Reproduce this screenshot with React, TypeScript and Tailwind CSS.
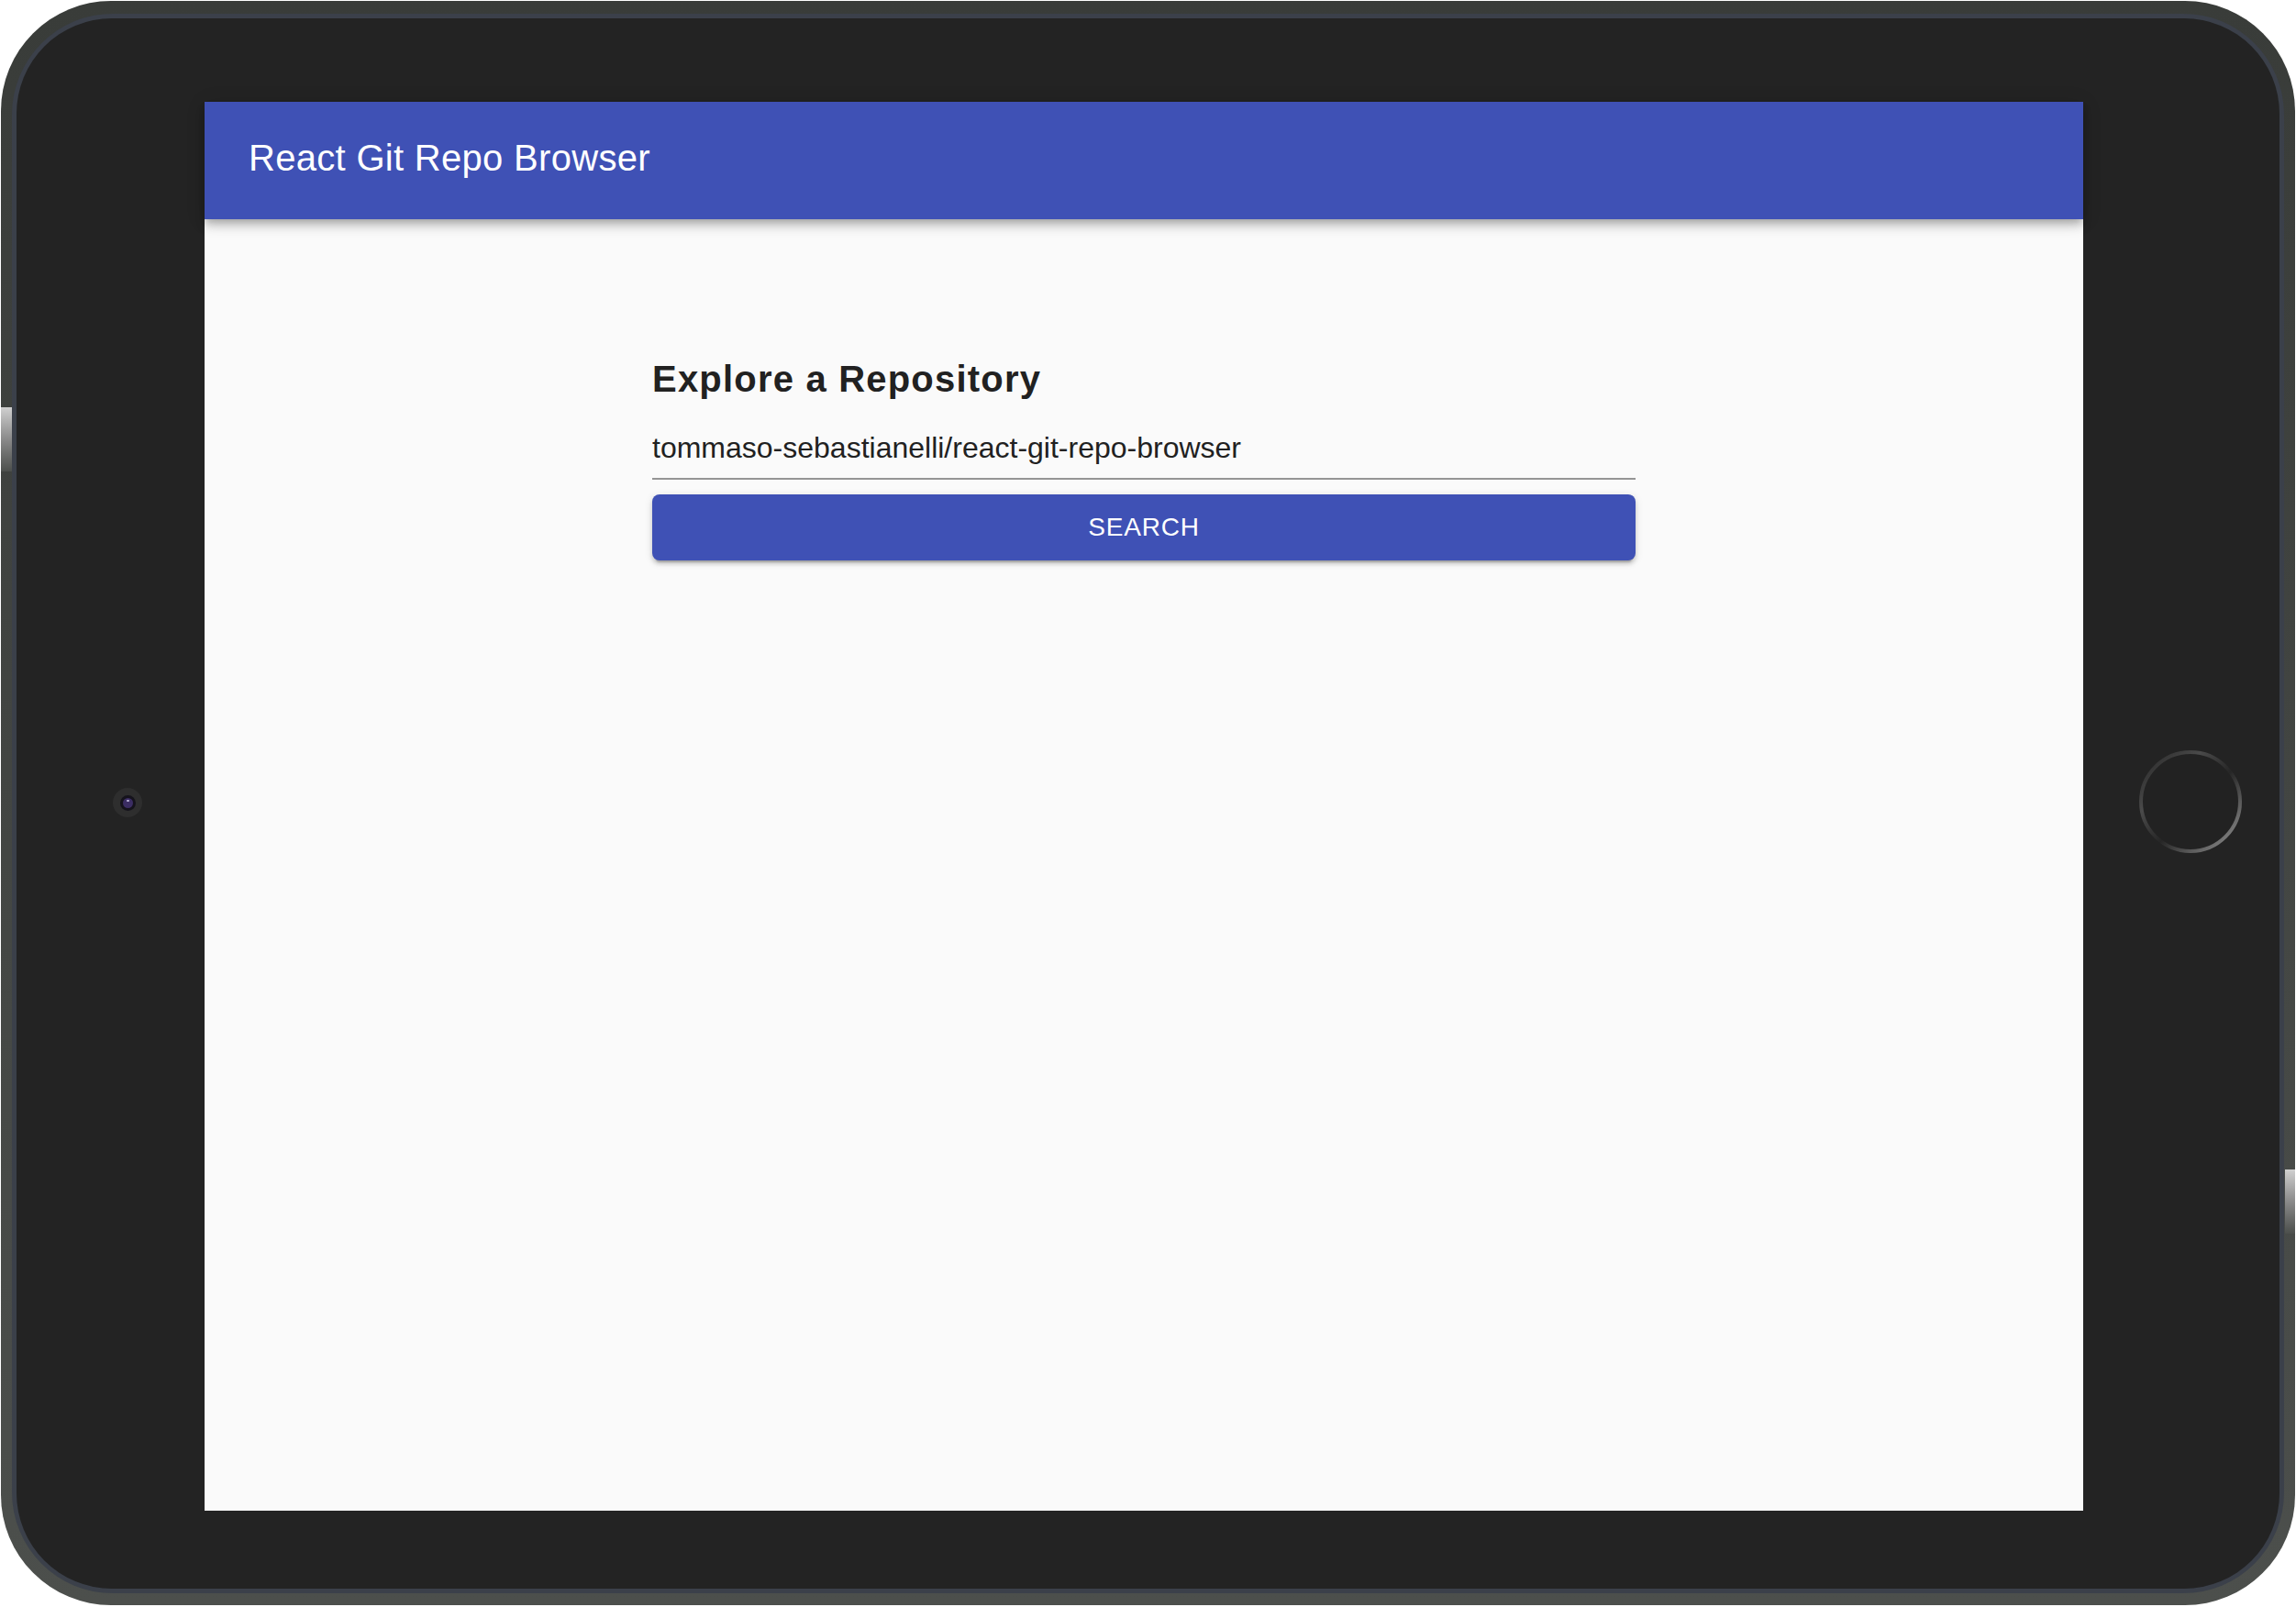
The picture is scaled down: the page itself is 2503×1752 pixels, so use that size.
import { useState } from 'react';

const font = { fontFamily: '"Liberation Sans", Arial, Helvetica, sans-serif' };

function Camera() {
  return (
    <div className="w-[32px] h-[32px] rounded-full bg-[#2e2e2e] flex items-center justify-center">
      <div className="relative w-[17px] h-[17px] rounded-full bg-[#15131c] flex items-center justify-center">
        <div className="w-[11px] h-[11px] rounded-full bg-[#3b2d63]" />
        <div className="absolute top-[5px] left-[7px] w-[3px] h-[2px] rounded-full bg-[#b9b2d6]" />
      </div>
    </div>
  );
}

function HomeButton() {
  return (
    <svg width="112" height="112" viewBox="0 0 112 112">
      <defs>
        <linearGradient id="homeRing" x1="0" y1="0" x2="1" y2="1">
          <stop offset="0" stopColor="#262626" />
          <stop offset="0.3" stopColor="#4a4a4a" />
          <stop offset="0.55" stopColor="#262626" />
          <stop offset="1" stopColor="#9a9a9a" />
        </linearGradient>
      </defs>
      <circle cx="56" cy="56" r="54" fill="#222222" stroke="url(#homeRing)" strokeWidth="4" />
    </svg>
  );
}

export default function App() {
  const [repo, setRepo] = useState('tommaso-sebastianelli/react-git-repo-browser');

  return (
    <div className="w-[2503px] h-[1752px] bg-white pt-[1px] pl-[1px]" style={font}>
      {/* Device frame */}
      <div className="relative w-[2501px] h-[1749px] rounded-[120px] bg-gradient-to-b from-[#393c39] to-[#4c4f4c] pt-[14px] pl-[12px] pr-[12px] pb-[13px]">
        <div className="absolute left-0 top-[443px] w-[12px] h-[70px] bg-gradient-to-b from-[#d0d0d0] via-[#8a8a8a] to-[#4c4f4c]" />
        <div className="absolute right-0 top-[1274px] w-[11px] h-[70px] bg-gradient-to-b from-[#d0d0d0] via-[#8a8a8a] to-[#4c4f4c]" />

        <div className="w-full h-full rounded-[110px] bg-[#3b404a] p-[5px]">
          <div className="w-full h-full rounded-[104px] bg-[#232323] flex items-center pt-[91px] pb-[85px]">
            <div className="w-[205px] flex justify-end pr-[68px] mb-[8px]">
              <Camera />
            </div>

            {/* Screen */}
            <div className="w-[2048px] h-[1536px] bg-[#fafafa] flex flex-col">
              <header className="h-[128px] bg-[#3f51b5] flex items-center px-[48px] pb-[6px] shadow-[0_4px_8px_-2px_rgba(0,0,0,0.2),0_8px_10px_0_rgba(0,0,0,0.14),0_2px_20px_0_rgba(0,0,0,0.12)] z-10">
                <h1 className="text-[40px] leading-none text-white tracking-[0.0075em]">React Git Repo Browser</h1>
              </header>

              <main className="w-[1072px] mx-auto pt-[154px] flex flex-col">
                <h2 className="text-[40px] leading-none font-bold text-[#212121] tracking-[0.03em]">Explore a Repository</h2>
                <div className="mt-[36px] pb-[14px] border-b-2 border-[#949494]">
                  <input
                    type="text"
                    value={repo}
                    onChange={(e) => setRepo(e.target.value)}
                    className="w-full h-[38px] text-[32px] leading-[38px] text-[#212121] bg-transparent outline-none p-0"
                    style={font}
                  />
                </div>
                <button className="mt-[16px] h-[72px] w-full rounded-[8px] bg-[#3f51b5] text-white text-[28px] leading-none tracking-[0.02857em] shadow-[0_6px_2px_-4px_rgba(0,0,0,0.2),0_4px_4px_0_rgba(0,0,0,0.14),0_2px_10px_0_rgba(0,0,0,0.12)]">
                  SEARCH
                </button>
              </main>
            </div>

            <div className="flex-1 flex pl-[61px] mb-[10px]">
              <HomeButton />
            </div>
          </div>
        </div>
      </div>
    </div>
  );
}
